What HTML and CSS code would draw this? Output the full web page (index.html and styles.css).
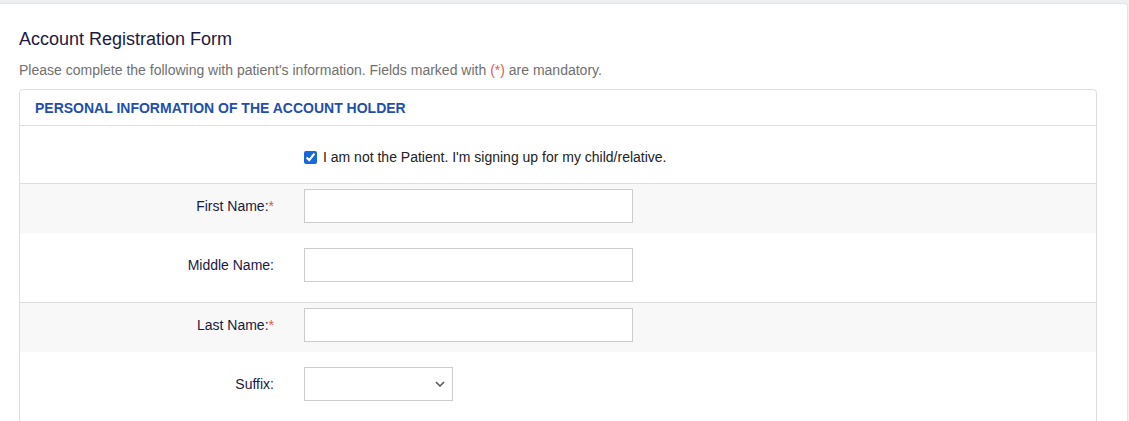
FILE: index.html
```html
<!DOCTYPE html>
<html lang="en">
<head>
<meta charset="utf-8">
<title>Account Registration Form</title>
<link rel="stylesheet" href="styles.css">
</head>
<body>
<div class="page">
  <div class="card">
    <h1 class="title">Account Registration Form</h1>
    <p class="subtitle">Please complete the following with patient's information. Fields marked with <span class="req">(*)</span> are mandatory.</p>
    <div class="panel">
      <div class="panel-head">PERSONAL INFORMATION OF THE ACCOUNT HOLDER</div>
      <div class="check-row">
        <label class="check-label"><input type="checkbox" checked class="check"> I am not the Patient. I'm signing up for my child/relative.</label>
      </div>
      <div class="form-row alt">
        <label class="lbl">First Name:<span class="req">*</span></label>
        <div class="field"><input type="text" class="input"></div>
      </div>
      <div class="form-row">
        <label class="lbl">Middle Name:</label>
        <div class="field"><input type="text" class="input"></div>
      </div>
      <div class="form-row alt">
        <label class="lbl">Last Name:<span class="req">*</span></label>
        <div class="field"><input type="text" class="input"></div>
      </div>
      <div class="form-row">
        <label class="lbl">Suffix:</label>
        <div class="field small">
          <div class="select-wrap">
            <select class="select"><option></option><option>Jr.</option><option>Sr.</option><option>II</option><option>III</option></select>
            <svg class="chev" width="10" height="6" viewBox="0 0 10 6"><path d="M1 1 L5 5 L9 1" fill="none" stroke="#555" stroke-width="1.5"/></svg>
          </div>
        </div>
      </div>
    </div>
  </div>
</div>
</body>
</html>
```
FILE: styles.css
```css
* { box-sizing: border-box; }
html, body { margin: 0; padding: 0; }
body {
  background: #eff0f2;
  font-family: "Liberation Sans", Arial, sans-serif;
  color: #1c1c3c;
  height: 421px;
  overflow: hidden;
}
.page { padding: 3px 1px 0 0; }
.card {
  background: #fff;
  border: 1px solid #e2e3e6;
  border-left: 0;
  border-bottom: 0;
  border-radius: 0 4px 0 0;
  padding: 24px 30px 0 19px;
  height: 418px;
  overflow: hidden;
}
.title {
  margin: 0;
  font-size: 18px;
  font-weight: normal;
  line-height: 22px;
  color: #1c1a40;
}
.subtitle {
  margin: 12px 0 0;
  font-size: 14px;
  line-height: 16px;
  color: #707070;
}
.req { color: #e05a4f; }
.panel {
  margin-top: 11px;
  border: 1px solid #dedede;
  border-radius: 4px 4px 0 0;
}
.panel-head {
  height: 36px;
  border-bottom: 1px solid #dedede;
  padding-left: 15px;
  display: flex;
  align-items: center;
  font-size: 14px;
  font-weight: bold;
  color: #1f4fab;
}
.check-row {
  height: 57px;
  display: flex;
  align-items: center;
  padding-left: 284px;
  padding-top: 5px;
  font-size: 14px;
  color: #222;
}
.check-label { display: flex; align-items: center; }
.check {
  margin: 0 6px 0 0;
  width: 13px;
  height: 13px;
  accent-color: #1668dc;
}
.form-row {
  display: flex;
  align-items: center;
  padding: 15px 0 20px;
}
.form-row.alt {
  background: #f8f8f8;
  border-top: 1px solid #dedede;
  padding: 5px 0 10px;
}
.lbl {
  width: 25%;
  padding-right: 15px;
  text-align: right;
  font-size: 14px;
  color: #1c1a40;
}
.field {
  width: 33.333%;
  padding: 0 15px;
}
.field.small { width: 16.666%; }
.input {
  display: block;
  width: 100%;
  height: 34px;
  border: 1px solid #cccccc;
  background: #fff;
  margin: 0;
  font: inherit;
}
.select-wrap { position: relative; }
.select {
  display: block;
  width: 100%;
  height: 34px;
  border: 1px solid #cccccc;
  background: #fff;
  appearance: none;
  -webkit-appearance: none;
  border-radius: 0;
  margin: 0;
  font: 14px "Liberation Sans", Arial, sans-serif;
}
.chev {
  position: absolute;
  right: 8px;
  top: 14px;
  pointer-events: none;
}
```
